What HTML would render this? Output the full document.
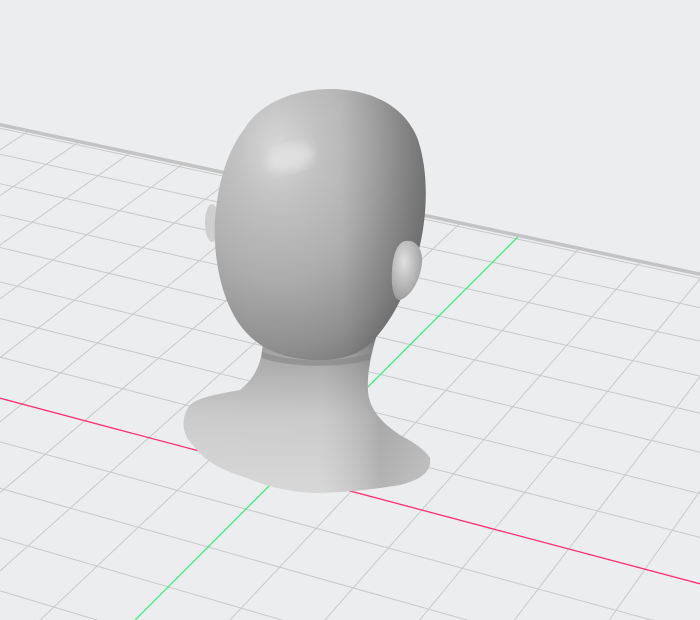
<!DOCTYPE html>
<html><head><meta charset="utf-8"><style>
html,body{margin:0;padding:0;background:#ecedef;width:700px;height:620px;overflow:hidden}
svg{display:block;overflow:hidden}
</style></head><body>
<svg id="s" width="700" height="620" viewBox="0 0 700 620" xmlns="http://www.w3.org/2000/svg">
<defs>
<clipPath id="cp"><rect x="0" y="0" width="700" height="620"/></clipPath>
<radialGradient id="hg" cx="0.3" cy="0.22" r="0.95">
<stop offset="0" stop-color="#d8d8d8"/>
<stop offset="0.2" stop-color="#c2c2c2"/>
<stop offset="0.5" stop-color="#adadad"/>
<stop offset="0.78" stop-color="#8e8e8e"/>
<stop offset="1" stop-color="#6a6a6a"/>
</radialGradient>
<linearGradient id="hs" x1="0" y1="0" x2="1" y2="0">
<stop offset="0" stop-color="#000" stop-opacity="0"/>
<stop offset="0.6" stop-color="#000" stop-opacity="0"/>
<stop offset="1" stop-color="#000" stop-opacity="0.22"/>
</linearGradient>
<linearGradient id="ng" x1="0" y1="0" x2="0" y2="1">
<stop offset="0" stop-color="#7e7e7e"/>
<stop offset="0.2" stop-color="#a2a2a2"/>
<stop offset="0.55" stop-color="#c6c6c6"/>
<stop offset="1" stop-color="#d4d4d4"/>
</linearGradient>
<linearGradient id="nh" x1="0" y1="0" x2="1" y2="0">
<stop offset="0" stop-color="#fff" stop-opacity="0.1"/>
<stop offset="0.55" stop-color="#fff" stop-opacity="0.08"/>
<stop offset="0.8" stop-color="#000" stop-opacity="0.15"/>
<stop offset="1" stop-color="#000" stop-opacity="0.08"/>
</linearGradient>
<radialGradient id="eg" cx="0.4" cy="0.35" r="0.7">
<stop offset="0" stop-color="#e0e0e0"/>
<stop offset="1" stop-color="#999"/>
</radialGradient>
<filter id="bl"><feGaussianBlur stdDeviation="5"/></filter>
</defs>
<g clip-path="url(#cp)">
<g id="grid"></g>
<g id="head">
<path d="M263,340 C262,360 258,375 240,390 C225,393 200,396 190,405 C180,418 182,435 193,445 C205,462 222,470 247,478 C265,486 290,492 313,493 C340,493 370,490 400,485 C420,480 432,472 430,458 C425,450 415,443 400,435 C385,425 370,412 368,392 C367,375 370,355 380,325 L300,330 Z" fill="url(#ng)"/>
<path d="M263,340 C262,360 258,375 240,390 C225,393 200,396 190,405 C180,418 182,435 193,445 C205,462 222,470 247,478 C265,486 290,492 313,493 C340,493 370,490 400,485 C420,480 432,472 430,458 C425,450 415,443 400,435 C385,425 370,412 368,392 C367,375 370,355 380,325 L300,330 Z" fill="url(#nh)"/>
<ellipse cx="212" cy="223" rx="7" ry="19" fill="#cfcfcf"/>
<path d="M330,89 C300,89 262,100 245,128 C228,150 218,180 215,220 C213,260 222,300 240,325 C255,345 275,357 310,360 C345,362 365,352 378,335 C395,315 410,285 420,245 C428,210 428,170 418,140 C405,105 370,89 330,89 Z" fill="url(#hg)"/>
<path d="M330,89 C300,89 262,100 245,128 C228,150 218,180 215,220 C213,260 222,300 240,325 C255,345 275,357 310,360 C345,362 365,352 378,335 C395,315 410,285 420,245 C428,210 428,170 418,140 C405,105 370,89 330,89 Z" fill="url(#hs)"/>
<path d="M262,352 C290,362 340,364 372,352 L370,360 C340,368 290,368 262,358 Z" fill="#7e7e7e" opacity="0.5"/>
<path d="M405,241 C415,239 423,248 422,262 C421,278 412,296 400,300 C393,300 391,285 392,270 C393,255 397,243 405,241 Z" fill="url(#eg)"/>
<ellipse cx="290" cy="158" rx="24" ry="13" fill="#e6e6e6" opacity="0.7" filter="url(#bl)" transform="rotate(-15 290 158)"/>
</g>
</g>
</svg>
<script>
(function(){
var NS="http://www.w3.org/2000/svg";
function P(X,Y){var d=1-0.0122*X+0.0242*Y;return [(64.73*X+42.0*Y+282)/d,(12.3*X-23.76*Y+473)/d];}
var g=document.getElementById('grid');
function line(a,b,c,w){var l=document.createElementNS(NS,'line');l.setAttribute('x1',a[0].toFixed(1));l.setAttribute('y1',a[1].toFixed(1));l.setAttribute('x2',b[0].toFixed(1));l.setAttribute('y2',b[1].toFixed(1));l.setAttribute('stroke',c);l.setAttribute('stroke-width',w);g.appendChild(l);}
var X0=-25,X1=25,Y0=-14,Y1=8;
for(var X=X0;X<=X1;X++){ if(X==0)continue; line(P(X,Y0),P(X,Y1),'#c9c9c9',1);}
for(var Y=Y0;Y<=Y1-0.5;Y++){ if(Y==0)continue; line(P(X0,Y),P(X1,Y),'#c9c9c9',1);}
line(P(X0,7.93),P(X1,7.93),'#c9c9c9',1);
line(P(X0,8.06),P(X1,8.06),'#c3c3c3',3.5);
line(P(X0,0),P(X1,0),'#ff2d6f',1.3);
line(P(0,Y0),P(0,8),'#3ef07c',1.3);
})();
</script>
</body></html>
